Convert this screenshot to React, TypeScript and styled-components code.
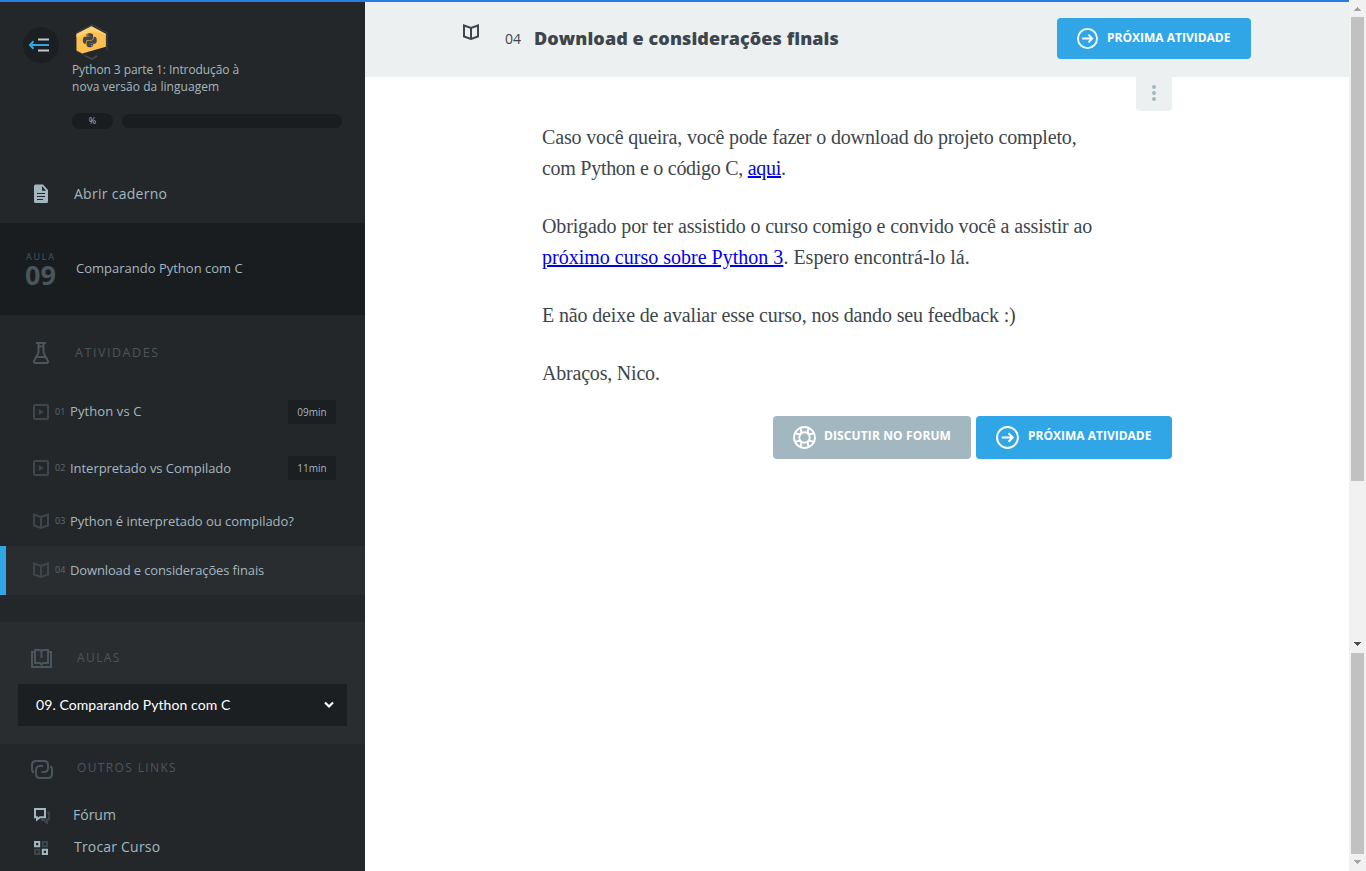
import React from "react";
import styled, { createGlobalStyle } from "styled-components";
import { FaPython } from "react-icons/fa";

const Global = createGlobalStyle`
  * { box-sizing: border-box; }
  html, body { margin: 0; padding: 0; overflow: hidden; }
  body { font-family: "Open Sans", "Noto Sans", sans-serif; background: #fff; }
  a { color: #0000ee; }
  svg { display: block; flex: none; }
`;

const Page = styled.div`
  display: flex;
  width: 1366px;
  height: 871px;
  overflow: hidden;
`;

const Screen = styled.div`
  display: flex;
  flex-direction: column;
  width: 1349px;
`;

const TopLine = styled.div`
  height: 2px;
  background: #2a7ae4;
`;

const Columns = styled.div`
  display: flex;
  flex: 1;
`;

interface LabelProps {
  $size: number;
  $ls?: number;
  $weight?: number;
  $color?: string;
  $line?: number;
  $lift?: number;
}

const Label = styled.span<LabelProps>`
  display: block;
  white-space: nowrap;
  font-size: ${(p) => p.$size}px;
  line-height: ${(p) => p.$line ?? 20}px;
  letter-spacing: ${(p) => p.$ls ?? 0}px;
  font-weight: ${(p) => p.$weight ?? 400};
  color: ${(p) => p.$color ?? "#a3b7c0"};
  padding-bottom: ${(p) => p.$lift ?? 0}px;
`;

const Sidebar = styled.aside`
  width: 365px;
  height: 869px;
  background: #232729;
  display: flex;
  flex-direction: column;
`;

const CourseHeader = styled.header`
  height: 221px;
  display: grid;
  grid-template-columns: 72px 270px;
  grid-template-rows: 169px 52px;
`;

const Toggle = styled.button`
  margin: 25px 0 0 23px;
  padding: 0;
  border: 0;
  width: 36px;
  height: 36px;
  border-radius: 50%;
  background: #1b1f21;
`;

const Course = styled.div`
  padding-top: 21px;
`;

const Progress = styled.div`
  display: flex;
  align-items: center;
  gap: 9px;
  margin-top: 18px;
`;

const Percent = styled.div`
  width: 41px;
  height: 16px;
  border-radius: 8px;
  background: #191d20;
  display: flex;
  justify-content: center;
`;

const Bar = styled.div`
  width: 220px;
  height: 14px;
  border-radius: 7px;
  background: #191d20;
`;

const Notebook = styled.a`
  grid-column: 1 / -1;
  display: flex;
  padding: 13px 0 0 33px;
  gap: 25px;
`;

const Lesson = styled.div`
  height: 92px;
  background: #191d20;
  display: flex;
  padding: 28px 0 0 25px;
`;

const LessonNumber = styled.div`
  width: 51px;
`;

const LessonWord = styled.div`
  padding-left: 1px;
`;

const LessonTitle = styled.div`
  padding-top: 7px;
`;

const Activities = styled.nav`
  height: 307px;
  padding-top: 24px;
`;

const ActivityList = styled.div`
  padding-top: 17px;
`;

const Heading = styled.div<{ $left: number; $gap: number; $height: number }>`
  display: flex;
  align-items: center;
  height: ${(p) => p.$height}px;
  padding-left: ${(p) => p.$left}px;
  gap: ${(p) => p.$gap}px;
`;

const Item = styled.div<{ $height: number; $active?: boolean }>`
  display: flex;
  align-items: center;
  height: ${(p) => p.$height}px;
  border-left: 6px solid ${(p) => (p.$active ? "#30a6e6" : "transparent")};
  background: ${(p) => (p.$active ? "#292d30" : "transparent")};
  padding: 0 29px ${(p) => (p.$active ? 1 : 0)}px 27px;
`;

const ItemNumber = styled.div`
  width: 21px;
  padding-left: 6px;
`;

const Duration = styled.div`
  margin-left: auto;
  width: 48px;
  height: 24px;
  border-radius: 2px;
  background: #1b1f21;
  display: flex;
  justify-content: center;
`;

const Lessons = styled.section`
  height: 122px;
  background: #292d30;
  padding: 20px 18px 0;
`;

const Select = styled.div`
  margin-top: 9px;
  width: 329px;
  height: 42px;
  background: #1b1f21;
  display: flex;
  align-items: center;
  justify-content: space-between;
  padding: 0 13px 0 18px;
  font-family: Lato, sans-serif;
`;

const Links = styled.section`
  flex: 1;
  padding-top: 10px;
`;

const LinkRow = styled.a<{ $gap: number }>`
  display: flex;
  align-items: center;
  height: 32px;
  padding-left: 33px;
  gap: ${(p) => p.$gap}px;
`;

const LinkList = styled.div`
  padding-top: 14px;
`;

const Main = styled.main`
  width: 984px;
  display: flex;
  flex-direction: column;
`;

const TaskHeader = styled.header`
  height: 75px;
  background: #ecf0f1;
  display: flex;
  align-items: flex-start;
  padding: 16px 98px 0 98px;
`;

const TaskIcon = styled.div`
  width: 42px;
  padding-top: 6px;
`;

const TaskNumber = styled.div`
  width: 29px;
  padding-top: 11px;
`;

const TaskTitle = styled.h1`
  margin: 0;
  padding-top: 7px;
  flex: 1;
`;

const Button = styled.button<{ $width: number; $height: number; $muted?: boolean }>`
  width: ${(p) => p.$width}px;
  height: ${(p) => p.$height}px;
  border: 0;
  border-radius: 4px;
  padding: 0 0 0 20px;
  background: ${(p) => (p.$muted ? "#a3b7c0" : "#30a6e6")};
  display: flex;
  align-items: center;
  gap: ${(p) => (p.$muted ? 8 : 9)}px;
  font-family: inherit;
`;

const Content = styled.article`
  width: 630px;
  margin-left: 177px;
`;

const Options = styled.div`
  margin-left: auto;
  width: 36px;
  height: 34px;
  border-radius: 0 0 4px 4px;
  background: #ecf0f1;
  display: flex;
  flex-direction: column;
  align-items: center;
  gap: 2px;
  padding-top: 8px;
`;

const Dot = styled.i`
  width: 4px;
  height: 4px;
  border-radius: 50%;
  background: #a3b7c0;
`;

const Prose = styled.div`
  padding-top: 11px;
`;

const Paragraph = styled.p`
  margin: 0 0 27px;
`;

const Line = styled.span<{ $ls: number }>`
  display: block;
  white-space: nowrap;
  font: 20px/31px "Liberation Serif", serif;
  letter-spacing: ${(p) => p.$ls}px;
  color: #3d464d;
`;

const Actions = styled.div`
  display: flex;
  justify-content: flex-end;
  gap: 5px;
`;

const Scrollbar = styled.div`
  width: 17px;
  height: 871px;
  background: #f1f1f1;
  display: flex;
  flex-direction: column;
  align-items: center;
`;

const Thumb = styled.div<{ $height: number }>`
  width: 13px;
  height: ${(p) => p.$height}px;
  background: #c1c1c1;
`;

const ArrowBox = styled.div<{ $height: number; $top: number }>`
  height: ${(p) => p.$height}px;
  padding-top: ${(p) => p.$top}px;
`;

const DIM = "#4b565c";
const ICON = "#3d464d";
const NUMBER = "#5e6b72";

function BookIcon() {
  return (
    <svg width="16" height="16" viewBox="0 0 16 16" fill="none" stroke={ICON} strokeWidth="2">
      <path d="M1 1.500 8 4l7-2.500v11L8 15 1 12.500zM8 4v11" />
    </svg>
  );
}

function VideoIcon() {
  return (
    <svg width="16" height="16" viewBox="0 0 16 16">
      <rect x="1" y="1" width="14" height="14" rx="1" fill="none" stroke={ICON} strokeWidth="2" />
      <path d="M6 5v6l5-3z" fill={ICON} />
    </svg>
  );
}

function ArrowCircle({ size }: { size: number }) {
  return (
    <svg width={size} height={size} viewBox="0 0 22 22" fill="none" stroke="#fff" strokeWidth="1.900">
      <circle cx="11" cy="11" r="10" />
      <path d="M5.500 11h10.500M12 7l4 4-4 4" />
    </svg>
  );
}

function BuoyIcon() {
  return (
    <svg width="23" height="23" viewBox="0 0 22 22" fill="none" stroke="#fff" strokeWidth="1.800">
      <circle cx="11" cy="11" r="10" />
      <circle cx="11" cy="11" r="5" />
      <path d="M6.800 2.500q2 2.500.700 4.700-2 1.400-5-.400M15.200 2.500q-2 2.500-.700 4.700 2 1.400 5-.400M6.800 19.500q2-2.500.700-4.700-2-1.400-5 .400M15.200 19.500q-2-2.500-.700-4.700 2-1.400 5 .400" />
    </svg>
  );
}

function Badge() {
  return (
    <svg width="40" height="38" viewBox="0 0 40 38">
      <path d="M20 1.800 35 10v18L20 36.500 5 28V10z" fill="none" stroke="#3b4043" strokeWidth="1.300" />
      <path d="M5 28.500 11 32l17-3 8-2v8h-9l-7 2-9-3z" fill="#232729" />
      <path d="M12.500 32.500 20 36l5-3" fill="none" stroke="#45494b" strokeWidth="1.600" />
      <path d="M19.500 3.300 33.900 11v12.800L10.300 30.500 4.500 27.500V11z" fill="#fdc050" />
      <path d="M19.500 3.300 33.900 11v1C24 7 12 9 4.500 14.500V11z" fill="#ffcf73" />
      <FaPython x="9.800" y="9.300" width="19" height="19" color="#41464a" />
    </svg>
  );
}

function ScrollArrow({ up, color }: { up?: boolean; color: string }) {
  return (
    <svg width="7" height="4" viewBox="0 0 7 4" shapeRendering="crispEdges">
      <path d={up ? "M0 4h7L3.500 0z" : "M0 0h7L3.500 4z"} fill={color} />
    </svg>
  );
}

export default function App() {
  return (
    <Page>
      <Global />
      <Screen>
        <TopLine />
        <Columns>
          <Sidebar>
            <CourseHeader>
              <Toggle aria-label="Menu">
                <svg width="36" height="36" viewBox="0 0 36 36" fill="none">
                  <path d="M15 12.500h11M15 23.500h11" stroke="#c4c7c8" strokeWidth="2" />
                  <path d="M7 18h19M10.500 14.300 7 18l3.500 3.700" stroke="#30a6e6" strokeWidth="2" />
                </svg>
              </Toggle>
              <Course>
                <Badge />
                <Label $size={12} $line={17} $ls={-0.1}>Python 3 parte 1: Introdução à</Label>
                <Label $size={12} $line={17} $ls={0.04}>nova versão da linguagem</Label>
                <Progress>
                  <Percent><Label $size={9} $line={16}>%</Label></Percent>
                  <Bar />
                </Progress>
              </Course>
              <Notebook>
                <svg width="16" height="20" viewBox="0 0 16 20">
                  <path d="M2.500.500H10L15 6v11.500a1.500 1.500 0 0 1-1.500 1.500h-11A1.500 1.500 0 0 1 1 17.500V2A1.500 1.500 0 0 1 2.500.500z" fill="#a3b7c0" />
                  <path d="M9 2v4.700h4z" fill="#232729" />
                  <path d="M4 9.500h8M4 12.500h8M4 15.500h6" fill="none" stroke="#232729" strokeWidth="1.200" />
                </svg>
                <Label $size={14} $ls={0.27}>Abrir caderno</Label>
              </Notebook>
            </CourseHeader>
            <Lesson>
              <LessonNumber>
                <LessonWord><Label $size={9} $ls={1.8} $line={12} $color={DIM}>AULA</Label></LessonWord>
                <Label $size={27} $weight={700} $line={23} $color={DIM}>09</Label>
              </LessonNumber>
              <LessonTitle><Label $size={13}>Comparando Python com C</Label></LessonTitle>
            </Lesson>
            <Activities>
              <Heading $left={32} $gap={25} $height={28}>
                <svg width="18" height="24" viewBox="0 0 18 24" fill="none" stroke={DIM} strokeWidth="2">
                  <path d="M4 2h10M6.500 2v9.500L2 20Q1.500 22 3.500 22h11Q16.500 22 16 20L11.500 11.500V2M6 5.500h5M4.500 16h9" />
                </svg>
                <Label $size={12.5} $ls={1.55} $color={DIM}>ATIVIDADES</Label>
              </Heading>
              <ActivityList>
                <Item $height={56}>
                  <VideoIcon />
                  <ItemNumber><Label $size={9} $color={NUMBER}>01</Label></ItemNumber>
                  <Label $size={13} $ls={0.1} $lift={2}>Python vs C</Label>
                  <Duration><Label $size={10} $line={24}>09min</Label></Duration>
                </Item>
                <Item $height={56}>
                  <VideoIcon />
                  <ItemNumber><Label $size={9} $color={NUMBER}>02</Label></ItemNumber>
                  <Label $size={13} $ls={-0.04}>Interpretado vs Compilado</Label>
                  <Duration><Label $size={10} $line={24}>11min</Label></Duration>
                </Item>
                <Item $height={50}>
                  <BookIcon />
                  <ItemNumber><Label $size={9} $color={NUMBER}>03</Label></ItemNumber>
                  <Label $size={13} $ls={-0.04}>Python é interpretado ou compilado?</Label>
                </Item>
                <Item $height={49} $active>
                  <BookIcon />
                  <ItemNumber><Label $size={9} $color={NUMBER}>04</Label></ItemNumber>
                  <Label $size={13} $ls={-0.13}>Download e considerações finais</Label>
                </Item>
              </ActivityList>
            </Activities>
            <Lessons>
              <Heading $left={13} $gap={25} $height={33}>
                <svg width="21" height="19" viewBox="0 0 21 19" fill="none" stroke={DIM} strokeWidth="2">
                  <path d="M3.500 3H1v15h19V3h-2.500M10.500 15.500 9 14H4V1h4.500q2 0 2 2 0-2 2-2H17v13h-5zM10.500 2v7" />
                </svg>
                <Label $size={12} $ls={1.4} $lift={2} $color={DIM}>AULAS</Label>
              </Heading>
              <Select>
                <Label $size={14} $ls={0.07} $color="#fff">09. Comparando Python com C</Label>
                <svg width="10" height="8" viewBox="0 0 10 8" fill="none" stroke="#fff" strokeWidth="2.200">
                  <path d="m1 1.500 4 4 4-4" />
                </svg>
              </Select>
            </Lessons>
            <Links>
              <Heading $left={31} $gap={24} $height={31}>
                <svg width="22" height="19" viewBox="0 0 22 19" fill="none" stroke={DIM} strokeWidth="2">
                  <path d="M3 12.500Q1 12 1 9V5q0-4 4-4h8q4 0 4 4v3q0 4-4 4h-2.500M19 6.500q2 .500 2 3V14q0 4-4 4H9q-4 0-4-4v-3q0-5 4-5h3" />
                </svg>
                <Label $size={12} $ls={1.36} $lift={4} $color={DIM}>OUTROS LINKS</Label>
              </Heading>
              <LinkList>
                <LinkRow $gap={23}>
                  <svg width="17" height="17" viewBox="0 0 17 17" fill="none">
                    <path d="M14 5.500h2v7h-2v3.500l-3-3H8" stroke={ICON} strokeWidth="1.800" />
                    <path d="M2 2h10v8.200H7L4 12.500v-2.300H2z" stroke="#a3b7c0" strokeWidth="2" />
                  </svg>
                  <Label $size={14}>Fórum</Label>
                </LinkRow>
                <LinkRow $gap={26}>
                  <svg width="15" height="16" viewBox="0 0 15 16" fill="none" strokeWidth="2">
                    <path d="M2 3h4.200v4.200H2zM9.800 10.800H14V15H9.800z" stroke="#a3b7c0" />
                    <path d="M9.800 3H14v4.200H9.800zM2 10.800h4.200V15H2z" stroke={ICON} />
                  </svg>
                  <Label $size={14} $ls={0.2}>Trocar Curso</Label>
                </LinkRow>
              </LinkList>
            </Links>
          </Sidebar>
          <Main>
            <TaskHeader>
              <TaskIcon><BookIcon /></TaskIcon>
              <TaskNumber><Label $size={14} $color={ICON}>04</Label></TaskNumber>
              <TaskTitle>
                <Label $size={18} $line={26} $ls={0.08} $weight={800} $color={ICON}>Download e considerações finais</Label>
              </TaskTitle>
              <Button $width={194} $height={41}>
                <ArrowCircle size={21} />
                <Label $size={12} $lift={1} $weight={700} $color="#fff">PRÓXIMA ATIVIDADE</Label>
              </Button>
            </TaskHeader>
            <Content>
              <Options><Dot /><Dot /><Dot /></Options>
              <Prose>
                <Paragraph>
                  <Line $ls={-0.15}>Caso você queira, você pode fazer o download do projeto completo,</Line>
                  <Line $ls={-0.28}>com Python e o código C, <a href="#">aqui</a>.</Line>
                </Paragraph>
                <Paragraph>
                  <Line $ls={-0.14}>Obrigado por ter assistido o curso comigo e convido você a assistir ao</Line>
                  <Line $ls={0.01}><a href="#">próximo curso sobre Python 3</a>. Espero encontrá-lo lá.</Line>
                </Paragraph>
                <Paragraph>
                  <Line $ls={-0.14}>E não deixe de avaliar esse curso, nos dando seu feedback :)</Line>
                </Paragraph>
                <Paragraph>
                  <Line $ls={-0.2}>Abraços, Nico.</Line>
                </Paragraph>
              </Prose>
              <Actions>
                <Button $width={198} $height={43} $muted>
                  <BuoyIcon />
                  <Label $size={12} $ls={0.12} $lift={3} $weight={700} $color="#fff">DISCUTIR NO FORUM</Label>
                </Button>
                <Button $width={196} $height={43}>
                  <ArrowCircle size={23} />
                  <Label $size={12} $lift={3} $weight={700} $color="#fff">PRÓXIMA ATIVIDADE</Label>
                </Button>
              </Actions>
            </Content>
          </Main>
        </Columns>
      </Screen>
      <Scrollbar>
        <ArrowBox $height={17} $top={7}><ScrollArrow up color="#a3a3a3" /></ArrowBox>
        <Thumb $height={464} />
        <ArrowBox $height={172} $top={161}><ScrollArrow color="#505050" /></ArrowBox>
        <Thumb $height={201} />
        <ArrowBox $height={17} $top={6}><ScrollArrow color="#a3a3a3" /></ArrowBox>
      </Scrollbar>
    </Page>
  );
}
